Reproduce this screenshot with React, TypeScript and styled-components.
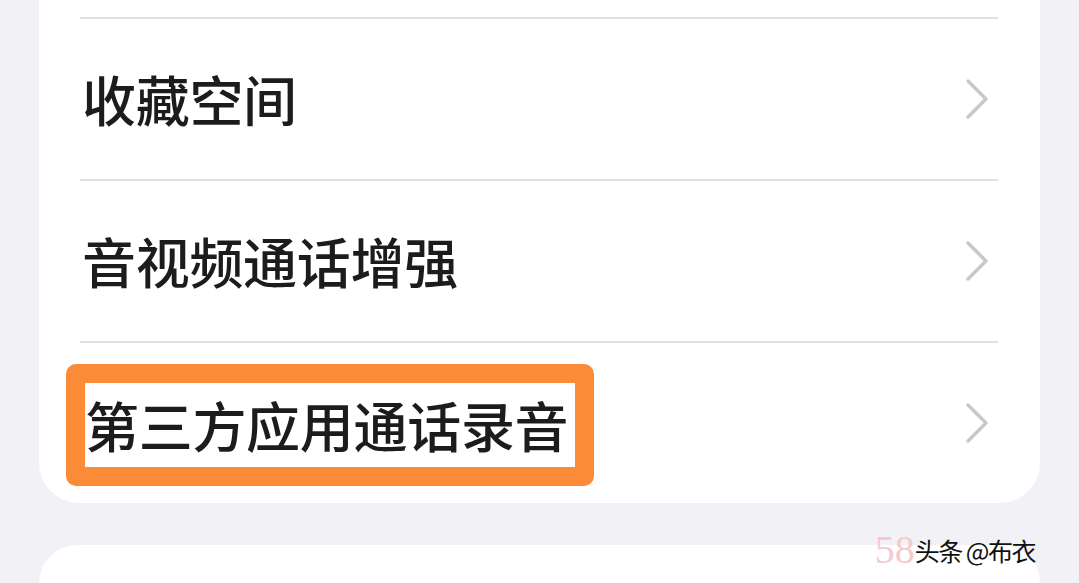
import React from 'react';
import styled, { createGlobalStyle } from 'styled-components';

const GlobalStyle = createGlobalStyle`
  html, body {
    margin: 0;
    padding: 0;
    background: #f2f2f6;
    overflow: hidden;
  }
  body {
    font-family: "Noto Sans CJK SC", "Noto Sans", sans-serif;
  }
`;

const Page = styled.div`
  position: relative;
  width: 1079px;
  height: 583px;
  display: flex;
  flex-direction: column;
  gap: 42px;
  padding-left: 39px;
  box-sizing: border-box;
`;

const Card = styled.div`
  width: 1001px;
  background: #ffffff;
  border-radius: 0 0 40px 40px;
  padding-top: 17px;
  display: flex;
  flex-direction: column;
`;

const NextCard = styled.div`
  width: 1001px;
  height: 120px;
  background: #ffffff;
  border-radius: 40px 40px 0 0;
`;

const Row = styled.div`
  margin: 0 42px 0 41px;
  height: 160px;
  border-top: 2px solid #e0e0e3;
  display: flex;
  align-items: center;
  justify-content: space-between;
  padding: 0 8px 0 2px;
`;

const Label = styled.span`
  font-size: 54px;
  font-weight: 500;
  color: #1c1c1e;
  letter-spacing: -0.3px;
  line-height: 1;
`;

const Highlight = styled.span`
  margin-left: -16px;
  margin-top: 4px;
  padding: 0 7px 0 0;
  border: 19px solid #fb8b37;
  border-radius: 10px;
  height: 84px;
  display: flex;
  align-items: center;
  background: #ffffff;
`;

const Chevron = styled.svg`
  width: 26px;
  height: 44px;
  flex: none;
`;

const Watermark = styled.div`
  position: absolute;
  right: 44px;
  bottom: 10px;
  display: flex;
  align-items: center;
`;

const Ghost = styled.span`
  font-family: "Liberation Serif", serif;
  font-size: 40px;
  color: #f6c9cd;
`;

const Credit = styled.span`
  font-size: 25px;
  color: #111111;
  letter-spacing: -1.5px;
`;

const Arrow = () => (
  <Chevron viewBox="0 0 26 44">
    <polyline
      points="4,4 22,22 4,40"
      fill="none"
      stroke="#c9c9cc"
      strokeWidth="3.5"
      strokeLinecap="round"
      strokeLinejoin="round"
    />
  </Chevron>
);

const App: React.FC = () => (
  <>
    <GlobalStyle />
    <Page>
      <Card>
        <Row>
          <Label>收藏空间</Label>
          <Arrow />
        </Row>
        <Row>
          <Label>音视频通话增强</Label>
          <Arrow />
        </Row>
        <Row>
          <Highlight>
            <Label>第三方应用通话录音</Label>
          </Highlight>
          <Arrow />
        </Row>
      </Card>
      <NextCard />
      <Watermark>
        <Ghost>58</Ghost>
        <Credit>头条 @布衣</Credit>
      </Watermark>
    </Page>
  </>
);

export default App;
